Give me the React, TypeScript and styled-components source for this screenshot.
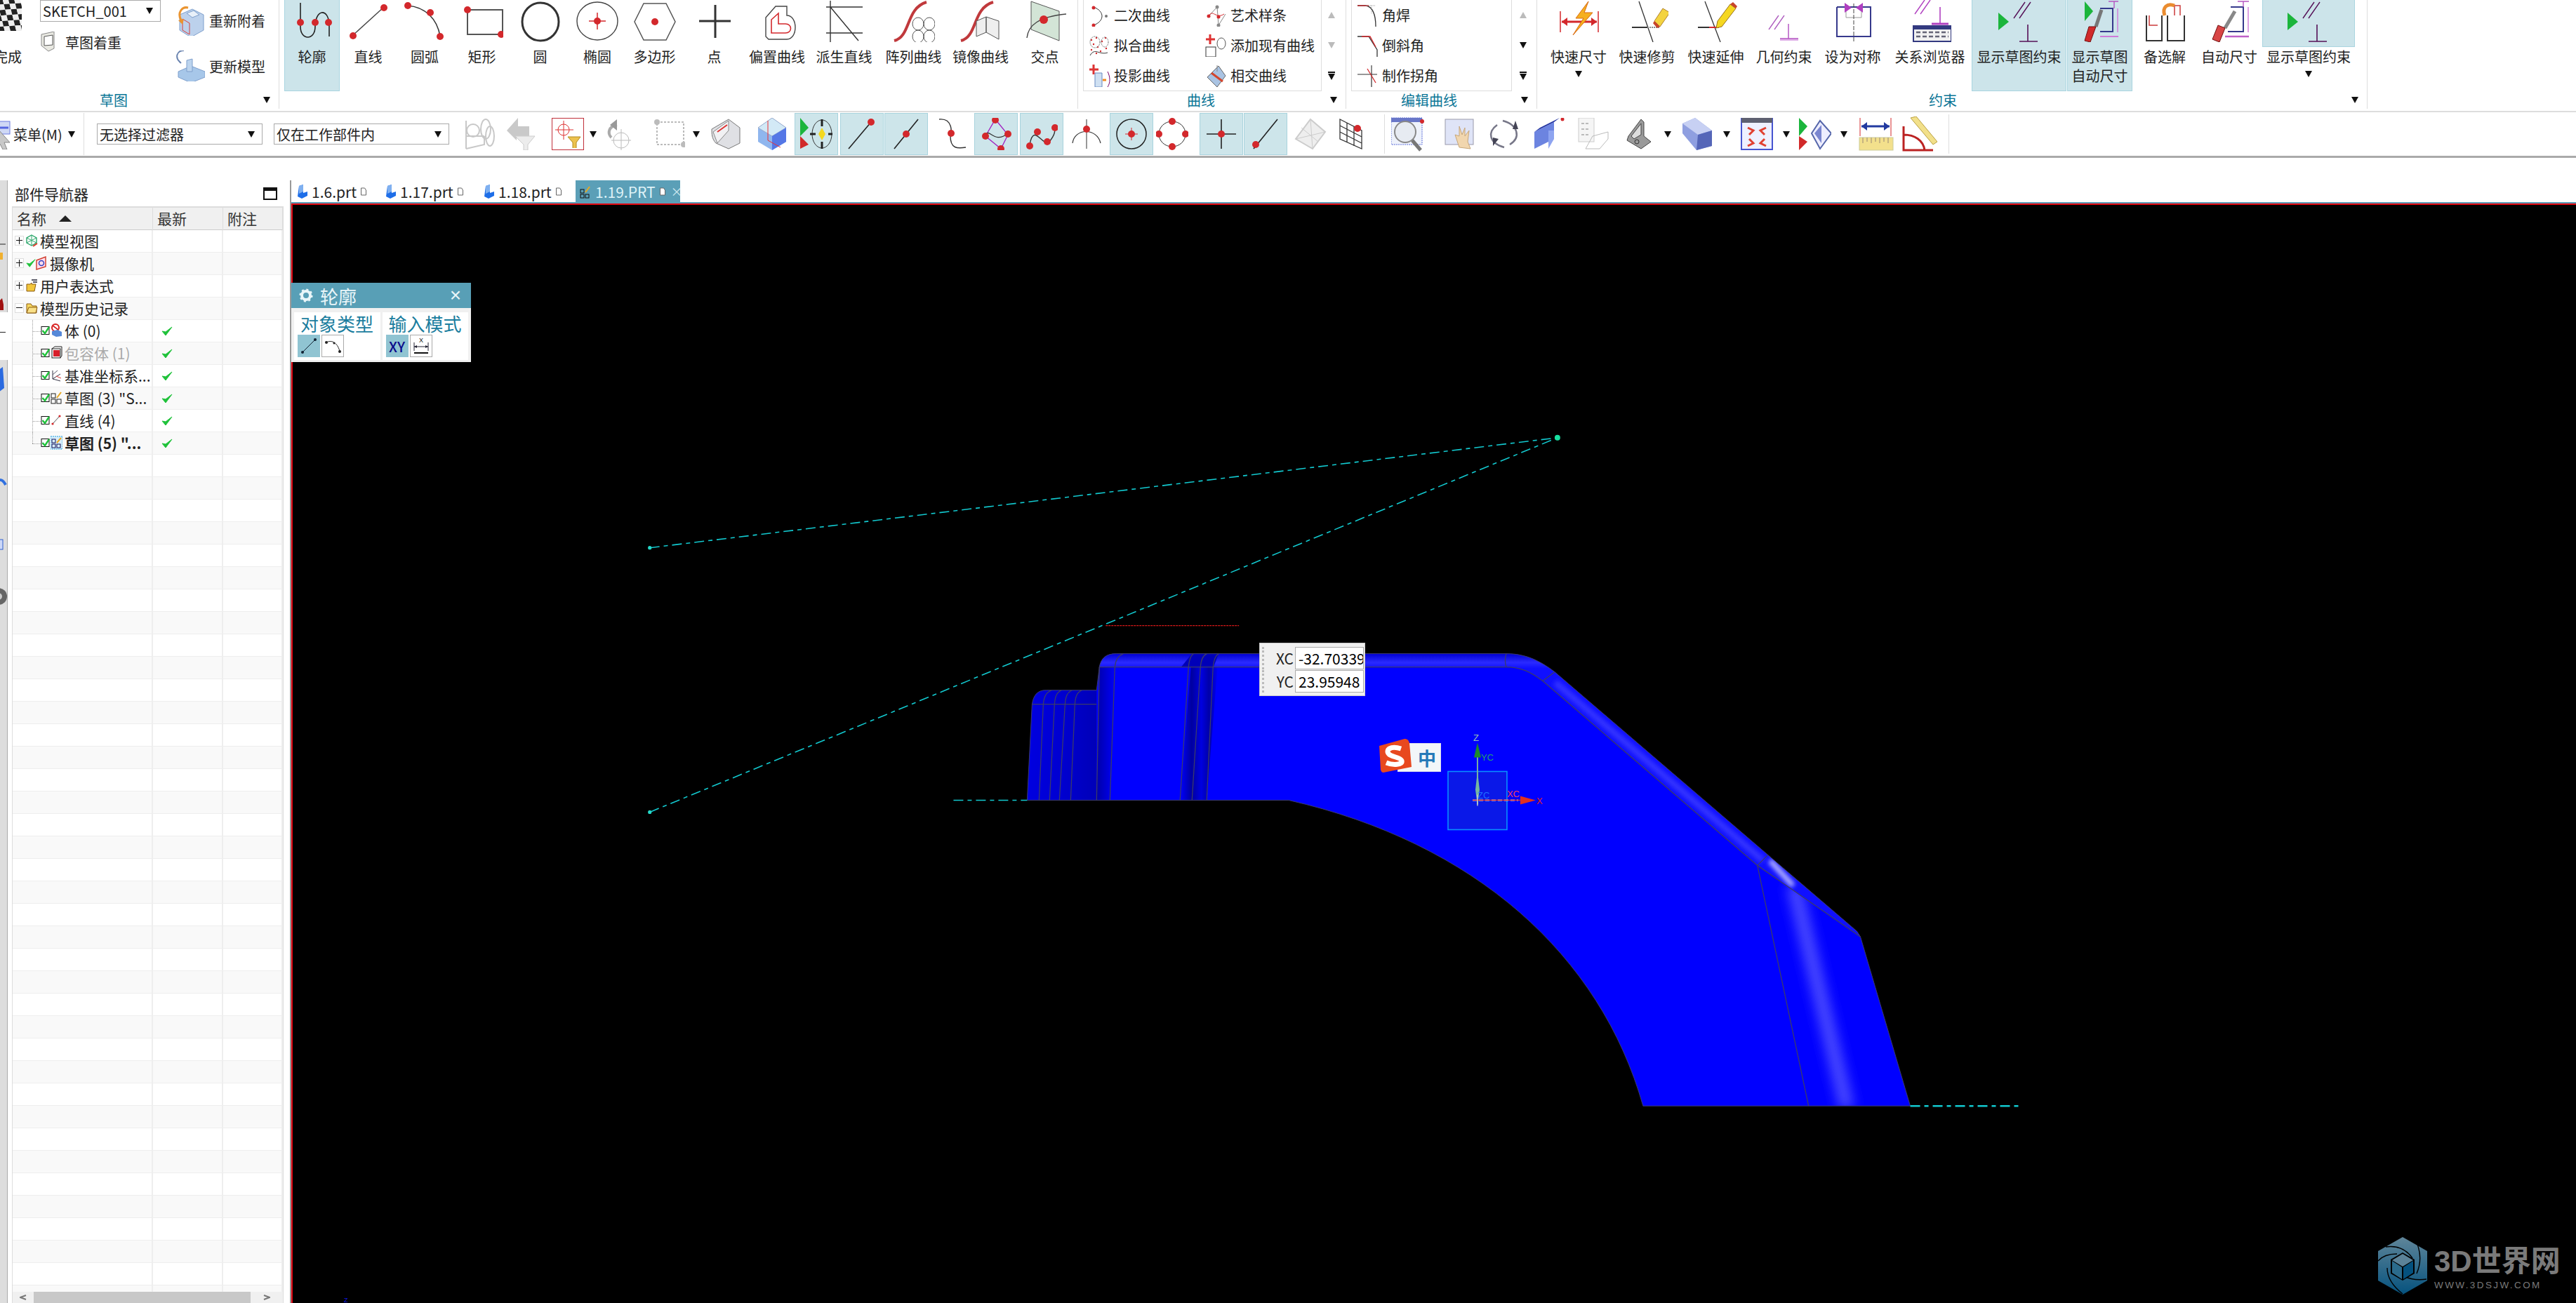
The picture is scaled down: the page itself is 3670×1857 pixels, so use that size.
import React from "react";
import styled, { createGlobalStyle } from "styled-components";

const Global = createGlobalStyle`
  html, body { margin: 0; padding: 0; background: #fff; overflow: hidden; }
  * { box-sizing: border-box; }
  body { font-family: "Noto Sans CJK SC", "Noto Sans", sans-serif; color: #222; }
`;

const Page = styled.div`width: 3670px; height: 1857px; overflow: hidden; display: flex; flex-direction: column; background: #fff;`;

/* ---------- ribbon ---------- */
const Ribbon = styled.div`display: flex; height: 160px; flex: none; border-bottom: 2px solid #ddd; margin-left: ${(p: { $ml: number }) => p.$ml}px;`;
const Group = styled.div<{ $w: number; $border?: boolean }>`
  width: ${(p) => p.$w}px; flex: none; height: 155px; display: flex; flex-direction: column;
  border-right: ${(p) => (p.$border === false ? "none" : "1px solid #ddd")};
`;
const GroupBody = styled.div<{ $pl?: number }>`height: 130px; display: flex; padding-left: ${(p) => p.$pl || 0}px;`;
const GroupFooter = styled.div`height: 25px; display: flex; align-items: center; padding-right: 12px; justify-content: flex-end;`;
const GroupLabel = styled.span<{ $ml: number }>`font-size: 20px; line-height: 25px; color: #0a7596; margin-right: auto; margin-left: ${(p) => p.$ml}px;`;
const Caret = styled.span<{ $c?: string; $up?: boolean }>`
  display: inline-block; width: 0; height: 0; border-left: 5px solid transparent; border-right: 5px solid transparent;
  ${(p) => (p.$up ? `border-bottom: 9px solid ${p.$c || "#111"};` : `border-top: 9px solid ${p.$c || "#111"};`)}
`;
const RibbonBtn = styled.div<{ $w: number; $on?: boolean; $mr?: number }>`
  width: ${(p) => p.$w}px; flex: none; height: 130px; display: flex; flex-direction: column; align-items: center;
  margin-right: ${(p) => p.$mr || 0}px;
  background: ${(p) => (p.$on ? "#cce4ea" : "transparent")};
  border: 1px solid ${(p) => (p.$on ? "#a9d5e0" : "transparent")};
  border-top: none;
`;
const IconWell = styled.div<{ $on?: boolean }>`
  height: 67px; width: 100%; display: flex; align-items: flex-start; justify-content: center; flex: none;
  background: ${(p) => (p.$on ? "#cce4ea" : "transparent")};
  box-shadow: ${(p) => (p.$on ? "inset 0 -1px 0 #a9d5e0, inset 1px 0 0 #a9d5e0, inset -1px 0 0 #a9d5e0" : "none")};
`;
const BtnLabel = styled.div`font-size: 20px; line-height: 27px; text-align: center; white-space: nowrap; color: #222;`;
const BtnCaret = styled.div`height: 22px; display: flex; align-items: center;`;

const SideCol = styled.div<{ $w: number; $ml?: number }>`width: ${(p) => p.$w}px; flex: none; margin-left: ${(p) => p.$ml || 0}px; display: flex; flex-direction: column;`;
const SideItem = styled.div<{ $h: number; $top?: number }>`height: ${(p) => p.$h}px; margin-top: ${(p) => p.$top || 0}px; display: flex; align-items: center; gap: 6px; font-size: 20px; white-space: nowrap;`;
const SelectBox = styled.div<{ $w: number; $h: number; $ml?: number; $fs?: number }>`
  width: ${(p) => p.$w}px; height: ${(p) => p.$h}px; margin-left: ${(p) => p.$ml || 0}px; flex: none; display: flex; align-items: center; justify-content: space-between;
  border: 1px solid #aaa; padding: 0 10px 0 3px; font-size: ${(p) => p.$fs || 20}px; background: #fff; white-space: nowrap;
`;
const Gallery = styled.div<{ $w: number; $cols: number }>`
  width: ${(p) => p.$w}px; height: 130px; flex: none; border: 1px solid #ddd; border-top: none; padding: 0 0 0 6px;
  display: grid; grid-template-columns: repeat(${(p) => p.$cols}, 1fr); grid-auto-rows: 43px;
`;
const GalleryItem = styled.div`display: flex; align-items: center; gap: 5px; font-size: 20px; white-space: nowrap;`;
const GalleryArrows = styled.div<{ $ml: number }>`width: 16px; margin-left: ${(p) => p.$ml}px; display: flex; flex-direction: column; align-items: center;`;
const ArrowCell = styled.div`height: 43px; display: flex; flex-direction: column; gap: 1px; align-items: center; justify-content: center;`;
const MoreBar = styled.span`width: 10px; height: 2px; background: #111;`;

/* ---------- toolbar ---------- */
const Toolbar = styled.div`height: 65px; flex: none; display: flex; align-items: center; border-bottom: 3px solid #aaa;`;
const MenuBlock = styled.div`width: 120px; height: 60px; flex: none; display: flex; align-items: center; border-right: 1px solid #ddd; font-size: 20px;`;
const MenuText = styled.span`margin-left: 3px; margin-right: 8px;`;
const ToolSlot = styled.div<{ $w: number; $ml: number; $on?: boolean; $framed?: boolean }>`
  width: ${(p) => p.$w}px; margin-left: ${(p) => p.$ml}px; height: ${(p) => (p.$framed ? 46 : 60)}px; flex: none; display: flex; align-items: center; justify-content: center;
  background: ${(p) => (p.$on ? "#cde5ea" : "transparent")};
  border: ${(p) => (p.$on ? "1px solid #a8d3dd" : p.$framed ? "1px solid #c0303a" : "none")};
`;
const ToolCaret = styled.div<{ $ml: number }>`width: 10px; margin-left: ${(p) => p.$ml}px; flex: none; display: flex;`;
const ToolSep = styled.div<{ $ml: number }>`width: 1px; height: 56px; background: #ddd; margin-left: ${(p) => p.$ml}px; flex: none;`;

/* ---------- main ---------- */
const TopGap = styled.div`height: 32px; flex: none;`;
const Main = styled.div`flex: 1; display: flex; min-height: 0;`;
const Strip = styled.div`width: 11px; flex: none; display: flex; flex-direction: column; overflow: hidden;`;
const StripSeg = styled.div<{ $h?: number }>`
  ${(p) => (p.$h ? `height:${p.$h}px;` : "flex:1;")} background: #ddd; border-right: 1px solid #aaa; overflow: hidden;
`;
const NavPanel = styled.div`width: 404px; flex: none; display: flex; flex-direction: column; padding: 0 9px 0 6px; border-right: 2px solid #999;`;
const NavTitle = styled.div`height: 37px; flex: none; display: flex; align-items: center; justify-content: space-between; padding: 0 9px 0 4px; font-size: 21px;`;
const MaxIcon = styled.span`width: 20px; height: 18px; border: 2px solid #111; border-top-width: 5px;`;
const NavTable = styled.div`flex: 1; min-height: 0; display: flex; flex-direction: column; border-left: 1px solid #ddd; border-right: 1px solid #ddd; border-top: 2px solid #ddd; overflow: hidden;`;
const HeadRow = styled.div`height: 32px; flex: none; display: grid; grid-template-columns: 200px 100px 1fr; background: #f0f0f0; border-bottom: 1px solid #ccc;`;
const HeadCell = styled.div`display: flex; align-items: center; gap: 18px; padding: 0 0 3px 6px; font-size: 21px; border-right: 1px solid #ddd; color: #333;`;
const SortMark = styled.span`width: 0; height: 0; border-left: 9px solid transparent; border-right: 9px solid transparent; border-bottom: 9px solid #222;`;
const Rows = styled.div`flex: 1; min-height: 0; overflow: hidden;`;
const TreeRow = styled.div<{ $odd: boolean }>`
  height: 32px; display: grid; grid-template-columns: 200px 100px 1fr; border-bottom: 1px solid #eee;
  background: ${(p) => (p.$odd ? "#f9f9f9" : "#fff")};
`;
const Cell = styled.div`border-right: 2px solid #eee; display: flex; align-items: center; min-width: 0;`;
const CheckCell = styled(Cell)`padding-left: 12px;`;
const NameCell = styled(Cell)<{ $child?: boolean; $last?: boolean; $trunk?: boolean }>`
  position: relative; padding: 0 0 2px ${(p) => (p.$child ? 40 : 3)}px; white-space: nowrap; overflow: hidden;
  &::before {
    content: ${(p) => (p.$child ? '""' : "none")}; position: absolute; left: 28px; top: 0; height: ${(p) => (p.$last ? "50%" : "100%")};
    border-left: 1px dotted #999;
  }
  &::after {
    content: ${(p) => (p.$child ? '""' : "none")}; position: absolute; left: 28px; top: 50%; width: 12px; border-top: 1px dotted #999;
  }
`;
const Expander = styled.span<{ $open?: boolean }>`
  width: 13px; height: 14px; flex: none; border: 1px solid #ddd; background: #fff; margin-right: 3px; position: relative;
  &::before { content: ""; position: absolute; left: 1px; right: 1px; top: 5px; height: 1px; background: #111; }
  &::after { content: ${(p) => (p.$open ? "none" : '""')}; position: absolute; top: 1px; bottom: 1px; left: 5px; width: 1px; background: #111; }
`;
const RowText = styled.span<{ $dim?: boolean; $bold?: boolean }>`
  font-size: 21px; margin-left: 3px; color: ${(p) => (p.$dim ? "#aaa" : "#222")}; font-weight: ${(p) => (p.$bold ? 700 : 400)};
`;
const ScrollBar = styled.div`height: 16px; flex: none; display: flex; background: #f0f0f0; margin-top: auto; align-items: center;`;
const ScrollEnd = styled.div<{ $w: number }>`width: ${(p) => p.$w}px; flex: none; display: flex; justify-content: center; color: #666;`;
const ScrollThumb = styled.div`flex: 1; height: 16px; background: #c8c8c8;`;

const Work = styled.div`flex: 1; min-width: 0; display: flex; flex-direction: column;`;
const TabBar = styled.div`height: 33px; flex: none; display: flex; border-bottom: 2px solid #5b9fb7; padding-left: 7px; background: #fff;`;
const Tab = styled.div<{ $w: number; $on?: boolean }>`
  width: ${(p) => p.$w}px; flex: none; display: flex; align-items: center; gap: 5px; font-size: 21px; padding-left: ${(p) => (p.$on ? 6 : 0)}px;
  background: ${(p) => (p.$on ? "#5b9fb7" : "transparent")}; color: ${(p) => (p.$on ? "#dff3f8" : "#222")};
`;
const TabClose = styled.span`font-size: 17px; color: #cfe8ef; margin-left: 2px;`;
const Viewport = styled.div`flex: 1; min-height: 0; position: relative; background: #000; border-top: 2px solid #e00010; border-left: 2px solid #e00010;`;
const Scene = styled.svg`display: block; width: 100%; height: 100%;`;

const Dialog = styled.div`position: absolute; left: -2px; top: 111px; width: 256px; height: 113px; background: #f0f0f0; display: flex; flex-direction: column;`;
const DialogHead = styled.div`height: 36px; flex: none; background: #589fb6; color: #eaf6f9; display: flex; align-items: center; padding: 0 14px 0 11px; font-size: 26px; gap: 10px;`;
const DialogClose = styled.span`margin-left: auto; font-size: 28px; font-family: "Liberation Sans", sans-serif; line-height: 1;`;
const DialogBody = styled.div`flex: 1; display: flex; gap: 3px; padding: 6px 4px 3px;`;
const DialogCard = styled.div`flex: 1; background: #fff; padding: 0 0 0 5px; display: flex; flex-direction: column;`;
const CardTitle = styled.div`font-size: 26px; line-height: 32px; color: #1a7d9e; padding-left: 4px; white-space: nowrap;`;
const CardBtns = styled.div`display: flex; gap: 2px;`;
const CardBtn = styled.div<{ $on?: boolean }>`
  width: 32px; height: 32px; display: flex; align-items: center; justify-content: center;
  background: ${(p) => (p.$on ? "#90c4d2" : "#fff")}; border: ${(p) => (p.$on ? "none" : "1px solid #aaa")};
  font-size: 20px; color: #0a0a8a; font-weight: 500;
`;

const Coords = styled.div`position: absolute; left: 1377px; top: 624px; width: 151px; height: 76px; background: #f0f0f0; border: 1px solid #ccc; display: grid; grid-template-columns: 50px 98px; grid-template-rows: 33px 33px; align-items: center; padding-top: 4px;`;
const CoordLabel = styled.div`font-size: 21px; line-height: 32px; text-align: right; padding-right: 2px; color: #222; border-left: 3px dotted #bbb; margin-left: 3px;`;
const CoordValue = styled.div`height: 32px; background: #fff; border: 1px solid #aaa; font-size: 21px; color: #000; overflow: hidden; white-space: nowrap; padding-left: 4px; line-height: 30px;`;

const Sogou = styled.div`position: absolute; left: 1544px; top: 761px; width: 92px; height: 48px;`;
const SogouBar = styled.div`position: absolute; left: 30px; top: 6px; width: 62px; height: 41px; background: #f2f6f9; color: #2579b8; font-size: 26px; font-weight: 700; display: flex; align-items: center; justify-content: center; padding-left: 22px; border: 1px solid #dde;`;
const Watermark = styled.div`position: absolute; left: 2970px; top: 1471px; display: flex; gap: 9px; align-items: center; color: #7a7a7a;`;
const MarkText = styled.div`display: flex; flex-direction: column;`;
const MarkTitle = styled.div`font-size: 42px; line-height: 46px; font-weight: 700; white-space: nowrap; font-family: "Liberation Sans", "Noto Sans CJK SC", sans-serif; margin-top: 6px;`;
const MarkUrl = styled.div`font-size: 13.5px; line-height: 16px; letter-spacing: 2.4px; font-family: "Liberation Sans", sans-serif; white-space: nowrap; margin-top: 3px;`;

/* ---------- icons ---------- */
const RED = "#d3282c";
const Dot = ({ x, y, r = 5, c = RED }: { x: number; y: number; r?: number; c?: string }) => <circle cx={x} cy={y} r={r} fill={c} />;
const Ic = ({ s = 60, v, children }: { s?: number; v?: string; children: React.ReactNode }) => (
  <svg width={s} height={s} viewBox={v || `0 0 ${s} ${s}`} fill="none" style={{ flex: "none" }}>{children}</svg>
);
const K = "#222";

const Big: Record<string, React.ReactNode> = {
  profile: <Ic><path d="M13 4V38C13 58 34 58 34 38C34 14 52 10 54 34V52" stroke={K} strokeWidth="1.6" /><Dot x={13} y={32} /><Dot x={34} y={32} /><Dot x={53} y={32} /></Ic>,
  line: <Ic><path d="M8 50L52 10" stroke="#444" strokeWidth="1.4" /><Dot x={52} y={11} /><Dot x={8} y={51} /></Ic>,
  arc: <Ic><path d="M6 8C30 10 48 26 52 52" stroke="#333" strokeWidth="1.6" /><Dot x={6} y={8} /><Dot x={38} y={18} /><Dot x={52} y={52} /></Ic>,
  rect: <Ic><rect x="9" y="14" width="50" height="35" stroke="#555" strokeWidth="2" /><Dot x={9} y={14} /><Dot x={57} y={49} /></Ic>,
  circle: <Ic><ellipse cx="30" cy="31" rx="26" ry="27" stroke="#333" strokeWidth="3" /></Ic>,
  ellipse: <Ic><ellipse cx="30" cy="30" rx="29" ry="27" stroke="#444" strokeWidth="1.4" /><Dot x={30} y={30} /><path d="M30 18V42M18 30H42" stroke={RED} strokeWidth="1.5" /></Ic>,
  polygon: <Ic><path d="M14 5H46L59 31L46 57H14L1 31Z" stroke="#555" strokeWidth="1.5" /><Dot x={30} y={31} /></Ic>,
  point: <Ic><path d="M31 7V54M8 30H53" stroke="#333" strokeWidth="3" /></Ic>,
  offset: <Ic><path d="M14 52V25L28 9H44V22C60 22 60 56 44 56H18Z" stroke="#444" strokeWidth="1.4" /><path d="M22 47V28L32 19V34H42C52 34 52 47 42 47Z" stroke={RED} strokeWidth="1.6" /></Ic>,
  derived: <Ic><path d="M4 10H56M4 47H56M10 1V60M10 10L50 58" stroke="#333" strokeWidth="1.4" /></Ic>,
  pattern: <Ic><path d="M2 58C26 52 18 12 48 3" stroke="#c0393c" strokeWidth="4" /><ellipse cx="36" cy="34" rx="8" ry="9" stroke="#555" /><ellipse cx="52" cy="34" rx="8" ry="9" stroke="#555" /><ellipse cx="36" cy="52" rx="8" ry="9" stroke="#555" /><ellipse cx="52" cy="52" rx="8" ry="9" stroke="#555" /></Ic>,
  mirror: <Ic><path d="M2 58C26 52 18 12 48 3" stroke="#c0393c" strokeWidth="4" /><path d="M24 30L38 24V46L24 52ZM38 24L56 30V56L38 46Z" fill="#eee" stroke="#555" /></Ic>,
  intersect: <Ic><path d="M10 2L50 16V58L10 42Z" fill="#d3e4d6" stroke="#555" /><path d="M4 54C6 36 20 24 60 20" stroke="#444" strokeWidth="1.4" /><Dot x={28} y={28} r={6} /></Ic>,
  rapid: <Ic><path d="M4 16V46M58 16V46" stroke={RED} strokeWidth="1.5" /><path d="M6 31H56" stroke={RED} strokeWidth="3" /><path d="M6 31L14 25V37ZM56 31L48 25V37Z" fill={RED} /><path d="M44 2L26 26H37L22 50L50 18H38Z" fill="#f5b020" stroke="#d96a10" /></Ic>,
  trim: <Ic><path d="M18 2L38 60" stroke="#333" strokeWidth="1.3" /><path d="M8 39H30" stroke="#333" strokeWidth="2" /><path d="M30 39H48" stroke="#888" strokeWidth="2" strokeDasharray="2 1" /><path d="M40 30L52 12L62 18L48 38Z" fill="#f3d340" stroke="#b0802a" /><path d="M40 30L48 38L44 40L38 33Z" fill="#c8452a" /></Ic>,
  extend: <Ic><path d="M14 2L36 60" stroke="#333" strokeWidth="1.3" /><path d="M4 39H20" stroke="#333" strokeWidth="2" /><path d="M20 39H34" stroke={RED} strokeWidth="2" /><path d="M32 30L50 6L58 12L38 38L30 40Z" fill="#f5d720" stroke="#98701a" /><path d="M50 6L54 3L60 9L58 12Z" fill="#c8452a" /></Ic>,
  geo: <Ic><path d="M8 42L22 22M16 42L30 22" stroke="#b060c0" strokeWidth="1.4" /><path d="M36 34V55M24 55H50" stroke="#b14dc0" strokeWidth="1.4" /><path d="M24 57H50" stroke="#e0b0e8" strokeWidth="2" /></Ic>,
  sym: <Ic><path d="M10 10V52H58V10H10" stroke="#36398c" strokeWidth="2" transform="translate(-3 0)" /><path d="M20 10V25H42V10" stroke="#999" strokeWidth="1" /><path d="M31 5V60" stroke="#444" strokeDasharray="6 2" strokeWidth="1" /><path d="M18 4L28 11L18 18ZM44 4L34 11L44 18Z" fill="#b13fc0" /></Ic>,
  browser: <Ic><path d="M8 20L22 0M16 20L30 0" stroke="#b040c0" strokeWidth="1.4" /><path d="M44 10V34" stroke="#b040c0" strokeWidth="1.6" /><path d="M32 34H56" stroke="#b040c0" strokeWidth="3" /><rect x="6" y="37" width="54" height="22" fill="#f1f1f1" stroke="#333a80" strokeWidth="2" /><rect x="6" y="37" width="54" height="5" fill="#333a80" /><path d="M10 46H56M10 52H56" stroke="#667" strokeWidth="2.5" strokeDasharray="6 3" /></Ic>,
  show: <Ic><path d="M0 18L15 31L0 43Z" fill="#1bb53c" /><path d="M22 26L38 3M30 26L46 3" stroke="#551057" strokeWidth="1.4" /><path d="M42 35V59M30 59H56" stroke="#551057" strokeWidth="1.6" /></Ic>,
  showAuto: <Ic><path d="M8 2L20 16L8 30Z" fill="#1bb53c" /><path d="M30 12H48V45H30" stroke="#36398c" strokeWidth="2" /><path d="M42 2H56M50 2V12" stroke="#b555c0" strokeWidth="1.4" /><path d="M55 12V46" stroke="#d07ad8" strokeWidth="1.4" /><path d="M30 52H56" stroke="#d07ad8" strokeWidth="2" /><path d="M32 14L24 38" stroke="#777" strokeWidth="5" /><path d="M24 38L16 60L8 58L14 38Z" fill="#d12a2a" stroke="#701010" /></Ic>,
  alt: <Ic><path d="M4 22V58H26V22M34 22V58H58V22" stroke="#333" strokeWidth="2" /><path d="M8 22V36H20M44 22V8H52V22" stroke="#cc3b3b" strokeWidth="1.5" /><path d="M30 22C26 10 34 4 44 8" stroke="#ea8c30" strokeWidth="5" /></Ic>,
  autoDim: <Ic><path d="M32 10H50V45H28" stroke="#36398c" strokeWidth="2" /><path d="M42 2H58M50 2V10" stroke="#b555c0" strokeWidth="1.4" /><path d="M57 10V46" stroke="#d07ad8" strokeWidth="1.4" /><path d="M24 52H58" stroke="#c060c8" strokeWidth="2.5" /><path d="M38 16L24 40" stroke="#888" strokeWidth="5" /><path d="M24 40L16 60L6 56L14 36Z" fill="#d84545" stroke="#701010" /></Ic>,
};

const S = 32;
const Small: Record<string, React.ReactNode> = {
  conic: <Ic s={S}><path d="M8 4C24 10 24 24 8 30" stroke="#333" /><Dot x={8} y={5} r={2.5} /><Dot x={8} y={30} r={2.5} /><Dot x={26} y={17} r={2} c="#777" /></Ic>,
  fit: <Ic s={S}><g fill={RED}><circle cx="5" cy="8" r="1.2" /><circle cx="12" cy="5" r="1.2" /><circle cx="8" cy="14" r="1.2" /><circle cx="14" cy="18" r="1.2" /><circle cx="20" cy="10" r="1.2" /><circle cx="25" cy="5" r="1.2" /><circle cx="5" cy="22" r="1.2" /><circle cx="26" cy="20" r="1.2" /><circle cx="18" cy="24" r="1.2" /><circle cx="12" cy="27" r="1.2" /></g><path d="M3 30C10 18 16 30 28 26" stroke="#333" /><ellipse cx="10" cy="11" rx="7" ry="8" stroke="#777" strokeDasharray="2 1" /><ellipse cx="24" cy="11" rx="5" ry="7" stroke="#777" strokeDasharray="2 1" /></Ic>,
  project: <Ic s={S}><path d="M8 0V14M2 7H15" stroke="#d33" strokeWidth="3" /><path d="M10 12H20V32H10Z" fill="#cfe0f2" stroke="#6689c0" /><path d="M28 10C32 18 32 26 28 32" stroke="#706" /><path d="M21 22H26" stroke="#f08a20" strokeWidth="3" /></Ic>,
  spline: <Ic s={S}><path d="M6 17L18 4L20 30L30 14" stroke="#888" /><Dot x={6} y={17} r={2.5} /><Dot x={18} y={4} r={2.5} c="#888" /><Dot x={20} y={30} r={2.5} c="#888" /><Dot x={20} y={18} r={2.5} /><path d="M6 17C12 6 16 22 28 14" stroke={RED} /></Ic>,
  add: <Ic s={S}><path d="M8 0V14M2 7H15" stroke="#d33" strokeWidth="3" /><ellipse cx="24" cy="13" rx="6" ry="8" stroke="#555" /><rect x="2" y="18" width="14" height="14" stroke="#333" /></Ic>,
  cross: <Ic s={S}><path d="M4 18L20 2L30 16L18 32Z" fill="#a9c3e2" stroke="#666" /><path d="M10 12L26 24" stroke="#d3452c" strokeWidth="3" /><path d="M18 1V10" stroke="#888" /></Ic>,
  fillet: <Ic s={S}><path d="M2 2H14C24 4 28 14 28 32" stroke="#333" strokeWidth="1.3" /><path d="M2 2H18" stroke={RED} strokeWidth="1.3" /><path d="M22 2V14M14 2H28" stroke="#999" strokeDasharray="1 1" /></Ic>,
  chamfer: <Ic s={S}><path d="M2 3H18L30 22V32" stroke="#333" strokeWidth="1.3" /><path d="M8 3H20L28 18" stroke={RED} strokeWidth="1.3" /></Ic>,
  corner: <Ic s={S}><path d="M2 14H30M22 32V1" stroke="#333" strokeWidth="1.2" /><path d="M16 6L28 26" stroke={RED} strokeWidth="1.3" /><path d="M22 1V10" stroke="#aaa" strokeDasharray="1 1" /></Ic>,
  refresh: <Ic s={44}><path d="M8 14L26 6L42 14V36L24 46L8 36Z" fill="#bcd1ec" stroke="#7f9fcc" /><path d="M18 12L28 8L36 14L26 18Z" fill="#e8f0f9" stroke="#7f9fcc" /><path d="M12 20V36L22 42V26Z" stroke="#d34040" /><path d="M10 22C4 10 12 2 20 4" stroke="#ea9430" strokeWidth="3" /><path d="M6 22L12 28L14 20Z" fill="#ea9430" /></Ic>,
  update: <Ic s={44}><path d="M6 30L24 22L44 30V38L24 46L6 38Z" fill="#a7c7e9" stroke="#7f9fcc" /><path d="M18 14L26 12V30H18Z" fill="#bcd4ee" stroke="#7f9fcc" /><path d="M10 18C0 10 4 0 14 0" stroke="#6b84b0" strokeWidth="2" /></Ic>,
  sketchShade: <Ic s={30}><path d="M2 4L20 0V24L12 28L2 20Z" fill="#e9e9e2" stroke="#888" /><path d="M6 7L18 5V19L6 20Z" fill="#fff" stroke="#555" /></Ic>,
};

const checker = Array.from({ length: 36 }, (_, i) => i);
const Flag = () => (
  <svg width="40" height="44" viewBox="0 0 40 44" style={{ flex: "none" }}>
    <g transform="rotate(-14 20 20) skewY(10)">
      {checker.map((i) => <rect key={i} x={-6 + (i % 6) * 8} y={-6 + Math.floor(i / 6) * 8} width="8" height="8" fill={(i + Math.floor(i / 6)) % 2 === 0 ? "#222" : "#eee"} />)}
    </g>
  </svg>
);

const T = 46;
const Tool: Record<string, React.ReactNode> = {
  d1: <Ic s={T}><g stroke="#c8c8c8" strokeWidth="2"><path d="M4 4V44M4 26H30M4 44L30 38V26" /><circle cx="14" cy="18" r="9" /><ellipse cx="32" cy="16" rx="7" ry="14" /><ellipse cx="38" cy="26" rx="6" ry="14" /></g></Ic>,
  d2: <Ic s={T}><path d="M20 0V12H36V26H18V32L4 18Z" fill="#c9c9c9" /><path d="M16 26H44L34 38V46H28V38Z" fill="#ececec" stroke="#ccc" /></Ic>,
  filter: <Ic s={40}><circle cx="14" cy="14" r="8" stroke="#d33" /><path d="M14 1V28M2 14H28" stroke="#d33" /><path d="M20 24H38L32 32V42H27V32Z" fill="#ecc24e" stroke="#b28a20" /></Ic>,
  undo: <Ic s={T}><path d="M18 10C6 12 4 22 10 28" stroke="#aaa" strokeWidth="4" /><path d="M14 2V18L4 10Z" fill="#999" transform="translate(4 0)" /><circle cx="24" cy="32" r="11" stroke="#bbb" /><path d="M24 16V46M10 32H38" stroke="#bbb" /></Ic>,
  d3: <Ic s={T}><rect x="6" y="6" width="38" height="32" stroke="#bbb" strokeWidth="2" strokeDasharray="3 2" /><Dot x={6} y={6} r={4} c="#bbb" /><Dot x={44} y={38} r={4} c="#bbb" /></Ic>,
  sect: <Ic s={T}><path d="M2 16L26 2L42 14V36L26 44L8 36C2 30 2 22 2 16Z" fill="#dfe0e4" stroke="#777" /><path d="M4 20L26 4V18L10 36Z" fill="#f1f1f3" stroke="#888" /><path d="M10 20L24 10" stroke="#d33" strokeWidth="2" /></Ic>,
  box: <Ic s={T}><path d="M24 0L44 14V34L24 46L4 34V14Z" fill="#8fb6ee" /><path d="M24 0L44 14L24 26L4 14Z" fill="#d3e9f6" stroke="#9ac" /><path d="M24 26V46L44 34V14Z" fill="#5577e6" /><path d="M18 4V32L36 42" stroke="#e33" /></Ic>,
  arrows: <Ic s={T}><path d="M0 0L12 14L0 26Z" fill="#1bb53c" /><path d="M0 28L12 40L0 46Z" fill="#d12a2a" transform="translate(0 -2)" /><ellipse cx="31" cy="23" rx="14" ry="20" stroke="#333" /><path d="M31 14L36 23L31 32L26 23Z" fill="#f4d820" /><path d="M31 2V12M31 34V44M14 23H22M40 23H46" stroke="#222" strokeWidth="3" /></Ic>,
  endp: <Ic s={T}><path d="M4 44L36 6" stroke="#222" strokeWidth="1.6" /><Dot x={36} y={6} r={5} /></Ic>,
  midp: <Ic s={T}><path d="M6 44L40 2" stroke="#222" strokeWidth="1.6" /><Dot x={23} y={23} r={5} /></Ic>,
  curve: <Ic s={T}><path d="M4 2C24 0 22 22 20 26C20 44 30 44 42 42" stroke="#333" strokeWidth="1.4" /><Dot x={21} y={22} r={5} /></Ic>,
  poly: <Ic s={T}><path d="M8 26L22 2L40 24L30 44Z" stroke="#a020c0" strokeWidth="1.3" /><path d="M8 24C14 14 20 38 40 22" stroke="#333" strokeWidth="1.3" /><Dot x={22} y={3} /><Dot x={8} y={26} /><Dot x={40} y={23} /><Dot x={30} y={44} /></Ic>,
  spline: <Ic s={T}><path d="M6 38C12 6 24 42 34 34C42 24 42 20 42 12" stroke="#333" strokeWidth="1.4" /><Dot x={6} y={40} /><Dot x={17} y={20} /><Dot x={31} y={34} /><Dot x={42} y={14} /></Ic>,
  inters: <Ic s={T}><path d="M3 36C6 14 38 14 43 36" stroke="#333" strokeWidth="1.2" /><path d="M23 2V44" stroke="#333" /><Dot x={23} y={16} r={5} /></Ic>,
  center: <Ic s={T}><ellipse cx="23" cy="23" rx="21" ry="21" stroke="#222" strokeWidth="1.5" /><Dot x={23} y={23} /><path d="M23 14V32M14 23H32" stroke={RED} /></Ic>,
  quad: <Ic s={T}><ellipse cx="23" cy="23" rx="19" ry="18" stroke="#333" /><Dot x={23} y={5} /><Dot x={23} y={41} /><Dot x={4} y={23} /><Dot x={42} y={23} /></Ic>,
  crossp: <Ic s={T}><path d="M23 2V44M2 23H44" stroke="#222" strokeWidth="1.6" /><Dot x={23} y={23} /></Ic>,
  tan: <Ic s={T}><path d="M6 44L40 2" stroke="#222" strokeWidth="1.6" /><Dot x={9} y={38} /></Ic>,
  mesh: <Ic s={T}><path d="M23 2L44 20L26 44L2 30Z" fill="#eee" stroke="#ccc" strokeWidth="2" /><path d="M23 2L26 44M2 30L44 20M10 14L34 34" stroke="#ccc" /></Ic>,
  grid: <Ic s={T}><path d="M3 2L34 18V44L3 30ZM3 11L34 27M3 20L34 36M13 7V35M23 12V40" stroke="#333" strokeWidth="1.3" /><Dot x={28} y={15} r={5} /></Ic>,
  mag: <Ic s={54} v="0 0 54 46"><rect x="0" y="0" width="44" height="38" fill="#eef2fb" stroke="#5a6cd8" strokeDasharray="2 1" /><rect x="0" y="0" width="44" height="6" fill="#6876c8" /><circle cx="20" cy="20" r="15" fill="#e7ebf2" stroke="#888" strokeWidth="2" /><path d="M30 32L42 46" stroke="#777" strokeWidth="5" /><Dot x={44} y={5} r={3} /></Ic>,
  hand: <Ic s={T}><rect x="2" y="2" width="40" height="36" fill="#dfe4f7" stroke="#99a" /><path d="M22 42L16 24L22 26V12L26 24L30 14V26L36 18L34 34L38 44Z" fill="#f1d6ae" stroke="#c6a67a" /></Ic>,
  rotate: <Ic s={T}><path d="M14 10C0 20 2 36 24 42" stroke="#778" strokeWidth="2.5" /><path d="M32 38C48 28 44 10 22 4" stroke="#778" strokeWidth="2.5" /><path d="M36 16L44 16L40 4ZM8 28L16 30L8 40Z" fill="#445" /></Ic>,
  block: <Ic s={T}><path d="M2 20L30 6V30L2 44Z" fill="#6c84e0" /><path d="M10 14L38 0L30 6L2 20Z" fill="#2233a0" /><path d="M22 18H30V30L22 44Z" fill="#8ea4f0" /><Dot x={42} y={2} r={2.5} /></Ic>,
  list: <Ic s={T}><rect x="2" y="0" width="22" height="34" stroke="#ccc" fill="#f5f5f5" /><path d="M6 8H18M6 16H18M6 24H18" stroke="#bbb" strokeDasharray="4 2" strokeWidth="2" /><path d="M12 44L22 26L44 20V30L32 44Z" stroke="#bbb" /></Ic>,
  plate: <Ic s={T}><path d="M8 26L26 2L30 6V26L40 34L26 44L6 32Z" fill="#9a9a9a" stroke="#444" /><path d="M12 26L26 8V24L16 30Z" fill="#ddd" stroke="#444" /><circle cx="20" cy="34" r="3" stroke="#333" /></Ic>,
  cube: <Ic s={T}><path d="M20 0L44 18V40L22 46L2 22V8Z" fill="#8f9fe0" /><path d="M20 0L44 18L24 24L2 8Z" fill="#c7d0f3" /><path d="M24 24L22 46L44 40V18Z" fill="#5566b8" /></Ic>,
  fit: <Ic s={T}><rect x="1" y="0" width="44" height="45" fill="#eef0ff" stroke="#4654d0" strokeWidth="2" /><rect x="1" y="0" width="44" height="7" fill="#5e6070" /><path d="M10 14L18 18L12 24M36 14L28 18L34 24M10 40L18 36L12 30M36 40L28 36L34 30" stroke="#e04030" strokeWidth="3" /></Ic>,
  diamond: <Ic s={T}><path d="M0 0L12 12L0 26Z" fill="#1bb53c" /><path d="M0 26L12 34L0 46Z" fill="#d12a2a" /><path d="M30 4L46 22L30 44L18 22Z" fill="#eef" stroke="#5566aa" strokeWidth="2" /><path d="M32 10V36L22 22Z" fill="#7a86d0" /></Ic>,
  measure: <Ic s={50}><path d="M2 2V28M46 2V28" stroke={RED} /><path d="M4 14H44" stroke="#223aa0" strokeWidth="3" /><path d="M4 14L12 8V20ZM44 14L36 8V20Z" fill="#223aa0" /><rect x="1" y="30" width="48" height="18" fill="#f3e08c" stroke="#cc9" /><path d="M6 30V38M12 30V36M18 30V38M24 30V36M30 30V38M36 30V36M42 30V38" stroke="#987" /></Ic>,
  ruler: <Ic s={50}><path d="M2 14V48H44M2 26C18 26 30 34 32 48" stroke="#b22" strokeWidth="3" /><path d="M12 2L20 0L50 36L44 40Z" fill="#f2e08a" stroke="#b9a040" /></Ic>,
};

const menuIcon = (
  <svg width="16" height="44" viewBox="0 0 16 44"><rect x="-4" y="4" width="18" height="18" fill="#cfd8f5" stroke="#6a7be0" /><path d="M0 13H12" stroke="#5566e0" strokeWidth="3" /><path d="M-2 16L14 34H6L10 44H4L0 36L-2 38Z" fill="#c8c8c8" stroke="#888" /></svg>
);

const g2 = [
  ["轮廓", 79, "profile", true], ["直线", 81, "line"], ["圆弧", 80, "arc"], ["矩形", 83, "rect"], ["圆", 83, "circle"], ["椭圆", 80, "ellipse"], ["多边形", 83, "polygon"],
  ["点", 87, "point"], ["偏置曲线", 92, "offset"], ["派生直线", 99, "derived"], ["阵列曲线", 99, "pattern"], ["镜像曲线", 92, "mirror"], ["交点", 91, "intersect"],
] as [string, number, string, boolean?][];

const tools: { a: number; b: number; k: string; on?: boolean; framed?: boolean }[] = [
  { a: 660, b: 705, k: "d1" }, { a: 722, b: 760, k: "d2" }, { a: 786, b: 832, k: "filter", framed: true }, { a: 840, b: 850, k: "^" }, { a: 862, b: 905, k: "undo" }, { a: 930, b: 975, k: "d3" }, { a: 987, b: 997, k: "^" },
  { a: 1012, b: 1058, k: "sect" }, { a: 1075, b: 1122, k: "box" }, { a: 1132, b: 1194, k: "arrows", on: true }, { a: 1197, b: 1259, k: "endp", on: true }, { a: 1260, b: 1322, k: "midp", on: true }, { a: 1335, b: 1378, k: "curve" },
  { a: 1388, b: 1450, k: "poly", on: true }, { a: 1453, b: 1515, k: "spline", on: true }, { a: 1525, b: 1570, k: "inters" }, { a: 1581, b: 1643, k: "center", on: true }, { a: 1645, b: 1695, k: "quad" },
  { a: 1709, b: 1771, k: "crossp", on: true }, { a: 1772, b: 1834, k: "tan", on: true }, { a: 1843, b: 1890, k: "mesh" }, { a: 1906, b: 1952, k: "grid" }, { a: 1972, b: 1973, k: "|" },
  { a: 1982, b: 2036, k: "mag" }, { a: 2057, b: 2103, k: "hand" }, { a: 2118, b: 2165, k: "rotate" }, { a: 2183, b: 2230, k: "block" }, { a: 2247, b: 2293, k: "list" }, { a: 2312, b: 2358, k: "plate" }, { a: 2371, b: 2381, k: "^" },
  { a: 2395, b: 2441, k: "cube" }, { a: 2455, b: 2465, k: "^" }, { a: 2480, b: 2526, k: "fit" }, { a: 2540, b: 2550, k: "^" }, { a: 2563, b: 2609, k: "diamond" }, { a: 2622, b: 2632, k: "^" }, { a: 2648, b: 2698, k: "measure" }, { a: 2710, b: 2760, k: "ruler" }, { a: 2776, b: 2777, k: "|" },
];

const Check = ({ size = 16 }: { size?: number }) => (
  <svg width={size} height={size} viewBox="0 0 16 16" style={{ flex: "none" }}><path d="M1 8L6 14L15 2L6 9Z" fill="#1fc23a" stroke="#1fc23a" /></svg>
);
const CheckBox = () => (
  <svg width="14" height="14" viewBox="0 0 14 14" style={{ flex: "none" }}><rect x="1" y="1.5" width="11" height="11" fill="#fff" stroke="#111" /><path d="M2.5 7L6 11L12 2" stroke="#1fc23a" strokeWidth="2.4" fill="none" /></svg>
);
const r16 = (c: React.ReactNode) => <svg width="17" height="20" viewBox="0 0 17 20" fill="none" style={{ flex: "none" }}>{c}</svg>;
const TreeIcons: Record<string, React.ReactNode> = {
  view: r16(<><path d="M8 2L15 6V13L8 17L1 13V6Z" stroke="#2aa66a" strokeWidth="1.4" /><path d="M8 2V17M1 6L15 13M15 6L1 13" stroke="#2aa66a" /><path d="M10 18L16 14" stroke="#e03a2a" strokeWidth="2" /></>),
  cam: r16(<><path d="M1 6L14 1V15L1 19Z" fill="#fde" stroke="#d03a2a" strokeWidth="1.4" /><circle cx="8" cy="10" r="3.5" stroke="#3040c0" strokeWidth="1.5" /></>),
  folderE: r16(<><path d="M1 8H6L8 6V8H14L12 18H1Z" fill="#f2c63c" stroke="#8a5a10" /><path d="M8 2H16M10 5H16" stroke="#223" strokeWidth="1.3" /></>),
  folder: r16(<><path d="M1 4H7L9 7H15V17H1Z" fill="#f6d860" stroke="#8a5a10" /><path d="M1 17L4 9H16L14 17Z" fill="#f9e088" stroke="#8a5a10" /></>),
  body: r16(<><circle cx="7" cy="6" r="5" stroke="#d82020" strokeWidth="2" /><path d="M3 3L11 9" stroke="#d82020" strokeWidth="1.6" /><path d="M2 11L10 9L16 12V18L8 19L2 16Z" fill="#5588d8" /></>),
  cont: r16(<><rect x="2" y="4" width="12" height="13" stroke="#222" /><path d="M2 4L6 1H16V14L14 17" stroke="#222" /><rect x="4" y="6" width="9" height="9" fill="#d81e2a" /></>),
  datum: r16(<><path d="M3 3V15L14 18M3 15L14 8" stroke="#334" /><path d="M3 9L10 3" stroke="#556" /><path d="M8 11L15 14" stroke="#d33" /></>),
  sketch: r16(<><rect x="1" y="4" width="6" height="6" stroke="#222" /><rect x="1" y="12" width="6" height="6" stroke="#222" /><rect x="9" y="12" width="6" height="6" stroke="#222" /><path d="M9 10L15 2" stroke="#e8a820" strokeWidth="2" /></>),
  lineI: r16(<><path d="M3 15L13 4" stroke="#555" /><Dot x={3} y={15} r={1.6} /><Dot x={13} y={4} r={1.6} /></>),
  sketchA: r16(<><rect x="0" y="1" width="17" height="18" fill="#d8eefc" stroke="#1d9de0" strokeDasharray="2 1" /><rect x="2" y="5" width="5" height="5" stroke="#115" /><rect x="2" y="12" width="5" height="5" stroke="#115" /><rect x="9" y="12" width="5" height="5" stroke="#115" /><path d="M9 10L15 3" stroke="#e8a820" strokeWidth="2" /></>),
};

type RowD = { t: string; icon: string; exp?: "+" | "-"; check?: boolean; child?: boolean; dim?: boolean; bold?: boolean; last?: boolean };
const rowData: RowD[] = [
  { t: "模型视图", icon: "view", exp: "+" },
  { t: "摄像机", icon: "cam", exp: "+", check: true },
  { t: "用户表达式", icon: "folderE", exp: "+" },
  { t: "模型历史记录", icon: "folder", exp: "-" },
  { t: "体 (0)", icon: "body", child: true },
  { t: "包容体 (1)", icon: "cont", child: true, dim: true },
  { t: "基准坐标系...", icon: "datum", child: true },
  { t: "草图 (3) \"S...", icon: "sketch", child: true },
  { t: "直线 (4)", icon: "lineI", child: true },
  { t: "草图 (5) \"...", icon: "sketchA", child: true, bold: true, last: true },
];
const emptyRows = Array.from({ length: 38 }, (_, i) => i);

const TabDoc = () => <svg width="10" height="14" viewBox="0 0 10 14" style={{ flex: "none" }}><path d="M1.5 2H6.5L8.5 5V12H1.5Z" fill="#fff" stroke="#666" /></svg>;
const TabBlock = () => <svg width="17" height="22" viewBox="0 0 17 22" style={{ flex: "none" }}><path d="M4 3L10 1V13L16 11V17L8 21L2 18Z" fill="#1e6ee8" /><path d="M4 3L10 1V11L4 14Z" fill="#7fb0f0" /></svg>;
const TabSketch = () => <svg width="17" height="22" viewBox="0 0 17 22" fill="none" style={{ flex: "none" }}><rect x="1" y="8" width="5" height="5" stroke="#111" /><rect x="1" y="15" width="5" height="5" stroke="#111" /><rect x="8" y="15" width="5" height="5" stroke="#111" /><path d="M8 12L14 4" stroke="#e8a820" strokeWidth="2" /></svg>;

const EDGE = "#3b3b6a";
const PART_D = "M1463,1140 L1470,1003 C1472,990 1478,983 1490,983 L1562,983 L1566,950 C1568,938 1575,931 1590,931 L2146,931 C2175,931 2195,942 2215,957 L2646,1327 L2651,1335 L2722,1576 L2341,1576 C2280,1360 2100,1200 1836,1140 Z";
const RIM_D = "M1566,950 C1568,938 1575,931 1590,931 L2146,931 C2175,931 2195,942 2215,957 L2646,1327 L2651,1335 L2504,1233 L2198,970 C2180,956 2165,950 2146,950 Z";

const PartScene = () => (
  <Scene viewBox="417 291 3253 1566">
    <defs>
      <clipPath id="part"><path d={PART_D} /></clipPath>
      <clipPath id="rim"><path d={RIM_D} /></clipPath>
      <clipPath id="lower"><path d="M2504,1233 L2651,1335 L2722,1576 L2577,1576 Z" /></clipPath>
      <linearGradient id="rimG" gradientUnits="userSpaceOnUse" x1="0" y1="931" x2="0" y2="952">
        <stop offset="0" stopColor="#0000d0" /><stop offset="0.6" stopColor="#2a2aff" /><stop offset="1" stopColor="#1010ff" />
      </linearGradient>
      <linearGradient id="tabG" x1="0" x2="1" y1="0" y2="0">
        <stop offset="0" stopColor="#0000e0" /><stop offset="0.5" stopColor="#0000d0" /><stop offset="1" stopColor="#0000b8" />
      </linearGradient>
      <linearGradient id="bandG" x1="0" x2="1" y1="0" y2="0">
        <stop offset="0" stopColor="#0000a8" /><stop offset="1" stopColor="#0000ff" />
      </linearGradient>
      <linearGradient id="grooveG" x1="0" x2="1" y1="0" y2="0">
        <stop offset="0" stopColor="#0000ff" /><stop offset="0.3" stopColor="#0000a0" /><stop offset="0.55" stopColor="#0000e0" /><stop offset="0.75" stopColor="#0000a8" /><stop offset="1" stopColor="#0000ff" />
      </linearGradient>
      <filter id="b10" x="-50%" y="-50%" width="200%" height="200%"><feGaussianBlur stdDeviation="9" /></filter>
      <filter id="b3" x="-50%" y="-50%" width="200%" height="200%"><feGaussianBlur stdDeviation="3" /></filter>
    </defs>

    <path d={PART_D} fill="#0000ff" />
    <g clipPath="url(#part)">
      <path d="M1463,1140 L1470,983 L1562,983 L1562,1140 Z" fill="url(#tabG)" />
      <path d="M1562,1140 L1566,931 L1590,931 L1581,1140 Z" fill="url(#bandG)" />
      <path d="M1681,1140 L1698,931 L1736,931 L1719,1140 Z" fill="url(#grooveG)" />
    </g>
    <path d={RIM_D} fill="url(#rimG)" />
    <g clipPath="url(#rim)">
      <path d="M2216,972 L2512,1226" stroke="#3434ff" strokeWidth="9" filter="url(#b3)" />
      <path d="M1681,952 L1698,931 L1736,931 L1728,952 Z" fill="#0000b8" />
      <path d="M2522,1226 L2555,1262" stroke="#b0b0ff" strokeWidth="8" filter="url(#b3)" />
    </g>
    <g clipPath="url(#lower)">
      <path d="M2556,1260 L2632,1580" stroke="#5050ff" strokeWidth="20" filter="url(#b10)" />
    </g>

    <g stroke={EDGE} strokeWidth="1.3" fill="none">
      <path d={PART_D} strokeWidth="1" />
      <path d="M1470,1003 H1562" />
      <path d="M1480,1140 L1486,1003 C1487,992 1490,986 1498,983M1495,1140 L1502,1003 C1503,992 1505,986 1512,983M1509,1140 L1517,1003 C1518,992 1520,986 1527,983M1525,1140 L1531,1003 C1532,992 1534,986 1541,983" />
      <path d="M1562,1140 L1566,950 H2146 C2165,950 2180,956 2198,970 L2504,1233 L2651,1335" />
      <path d="M1581,1140 L1588,950 C1589,940 1592,934 1600,931" />
      <path d="M1681,1140 L1693,950 C1694,940 1696,934 1700,931M1698,1140 L1710,950 C1711,940 1713,934 1719,931M1719,1140 L1728,950 C1729,940 1731,934 1736,931" />
      <path d="M2146,931 C2144,938 2144,944 2146,950M2198,970 L2215,957M2504,1233 L2519,1218M2504,1233 L2577,1576" />
    </g>

    <g stroke="#12c9cf" strokeWidth="1.6" strokeDasharray="14 6 6 6" fill="none">
      <path d="M925,780 L2219,623" />
      <path d="M925,1157 L2219,623" />
      <path d="M1358,1140 H1463" />
      <path d="M2722,1576 H2879" strokeWidth="2.4" />
    </g>
    <path d="M1575,891 H1765" stroke="#d81818" strokeWidth="1.2" strokeDasharray="3 1" />
    <circle cx="2219" cy="623" r="4" fill="#18e0a0" />
    <circle cx="925" cy="780" r="2.6" fill="#24d8c8" />
    <circle cx="925" cy="1157" r="2.6" fill="#24d8c8" />

    <rect x="2063" y="1099" width="84" height="83" fill="#0a18e8" stroke="#0a8fff" strokeWidth="1.6" />
    <path d="M2105,1078 L2105,1146" stroke="#7ab0a0" strokeWidth="2" />
    <path d="M2105,1099 L2102,1125 L2105,1146 L2108,1125 Z" fill="#76b8a0" />
    <path d="M2105,1058 L2100,1079 H2110 Z" fill="#1d8a2a" />
    <path d="M2098,1140 H2163" stroke="#e0e0e0" strokeWidth="2" strokeDasharray="6 3" />
    <path d="M2098,1140 H2166" stroke="#e03030" strokeWidth="1.2" />
    <path d="M2166,1134 L2188,1140 L2166,1146 Z" fill="#e03020" />
    <path d="M2105,1132 V1148" stroke="#ccc" strokeWidth="1.4" />
    <g fontFamily="Liberation Sans, sans-serif" fontSize="13">
      <text x="2099" y="1056" fill="#9ac0b0">Z</text>
      <text x="2110" y="1084" fill="#20a070">YC</text>
      <text x="2105" y="1138" fill="#1f6fff">ZC</text>
      <text x="2147" y="1136" fill="#f04060">XC</text>
      <text x="2189" y="1146" fill="#e02020">X</text>
    </g>
    <text x="489" y="1856" fontFamily="Liberation Sans, sans-serif" fontSize="9" fill="#1018e0">Z</text>
  </Scene>
);

const StripIconsTop = () => (
  <svg width="10" height="188" viewBox="0 0 10 188"><path d="M0 91H8" stroke="#222" /><rect x="-2" y="103" width="6" height="10" fill="#f0b030" /><path d="M-2 173L3 168L5 177V185H-2Z" fill="#a01010" /></svg>
);
const StripIconsBottom = () => (
  <svg width="10" height="1344" viewBox="0 0 10 1344"><path d="M4 10L-2 14V46L6 40Z" fill="#2a6ae0" /><path d="M8 178C4 170 0 170 -4 172" stroke="#3070e0" strokeWidth="4" fill="none" /><rect x="-2" y="256" width="6" height="14" fill="#ccd8f8" stroke="#3060d0" /><circle cx="-2" cy="337" r="12" fill="#666" /><circle cx="-2" cy="337" r="5" fill="#ccc" /></svg>
);
const StripGapIcons = styled.div`height: 68px; flex: none; padding-top: 28px;`;
const StripDash = styled.div`width: 8px; height: 1px; background: #222;`;

export default function App() {
  let prev = 640;
  return (
    <Page>
      <Global />
      <Ribbon $ml={-73}>
        <Group $w={471}>
          <GroupBody>
            <SideCol $w={72} $ml={48}>
              <IconWell><Flag /></IconWell>
              <BtnLabel>完成</BtnLabel>
            </SideCol>
            <SideCol $w={191} $ml={10}>
              <SelectBox $w={172} $h={31} $fs={20}>SKETCH_001<Caret /></SelectBox>
              <SideItem $h={32} $top={13}>{Small.sketchShade}<span>草图着重</span></SideItem>
            </SideCol>
            <SideCol $w={140}>
              <SideItem $h={46} $top={6}>{Small.refresh}<span>重新附着</span></SideItem>
              <SideItem $h={46} $top={19}>{Small.update}<span>更新模型</span></SideItem>
            </SideCol>
          </GroupBody>
          <GroupFooter>
            <GroupLabel $ml={215}>草图</GroupLabel>
            <Caret />
          </GroupFooter>
        </Group>
        <Group $w={1138}>
          <GroupBody $pl={7}>
            {g2.map(([t, w, k, on]) => (
              <RibbonBtn key={t} $w={w} $on={on}>
                <IconWell>{Big[k]}</IconWell>
                <BtnLabel>{t}</BtnLabel>
              </RibbonBtn>
            ))}
          </GroupBody>
        </Group>
        <Group $w={382}>
          <GroupBody $pl={7}>
            <Gallery $w={340} $cols={2}>
              <GalleryItem>{Small.conic}二次曲线</GalleryItem>
              <GalleryItem>{Small.spline}艺术样条</GalleryItem>
              <GalleryItem>{Small.fit}拟合曲线</GalleryItem>
              <GalleryItem>{Small.add}添加现有曲线</GalleryItem>
              <GalleryItem>{Small.project}投影曲线</GalleryItem>
              <GalleryItem>{Small.cross}相交曲线</GalleryItem>
            </Gallery>
            <GalleryArrows $ml={6}>
              <ArrowCell><Caret $up $c="#bbb" /></ArrowCell>
              <ArrowCell><Caret $c="#bbb" /></ArrowCell>
              <ArrowCell><MoreBar /><Caret /></ArrowCell>
            </GalleryArrows>
          </GroupBody>
          <GroupFooter>
            <GroupLabel $ml={155}>曲线</GroupLabel>
            <Caret />
          </GroupFooter>
        </Group>
        <Group $w={272}>
          <GroupBody $pl={7}>
            <Gallery $w={229} $cols={1}>
              <GalleryItem>{Small.fillet}角焊</GalleryItem>
              <GalleryItem>{Small.chamfer}倒斜角</GalleryItem>
              <GalleryItem>{Small.corner}制作拐角</GalleryItem>
            </Gallery>
            <GalleryArrows $ml={8}>
              <ArrowCell><Caret $up $c="#bbb" /></ArrowCell>
              <ArrowCell><Caret /></ArrowCell>
              <ArrowCell><MoreBar /><Caret /></ArrowCell>
            </GalleryArrows>
          </GroupBody>
          <GroupFooter>
            <GroupLabel $ml={78}>编辑曲线</GroupLabel>
            <Caret />
          </GroupFooter>
        </Group>
        <Group $w={1183}>
          <GroupBody $pl={10}>
            <RibbonBtn $w={98}><IconWell>{Big.rapid}</IconWell><BtnLabel>快速尺寸</BtnLabel><BtnCaret><Caret /></BtnCaret></RibbonBtn>
            <RibbonBtn $w={97}><IconWell>{Big.trim}</IconWell><BtnLabel>快速修剪</BtnLabel></RibbonBtn>
            <RibbonBtn $w={99}><IconWell>{Big.extend}</IconWell><BtnLabel>快速延伸</BtnLabel></RibbonBtn>
            <RibbonBtn $w={95}><IconWell>{Big.geo}</IconWell><BtnLabel>几何约束</BtnLabel></RibbonBtn>
            <RibbonBtn $w={101}><IconWell>{Big.sym}</IconWell><BtnLabel>设为对称</BtnLabel></RibbonBtn>
            <RibbonBtn $w={119}><IconWell>{Big.browser}</IconWell><BtnLabel>关系浏览器</BtnLabel></RibbonBtn>
            <RibbonBtn $w={135} $on $mr={1}><IconWell>{Big.show}</IconWell><BtnLabel>显示草图约束</BtnLabel></RibbonBtn>
            <RibbonBtn $w={93} $on><IconWell>{Big.showAuto}</IconWell><BtnLabel>显示草图<br />自动尺寸</BtnLabel></RibbonBtn>
            <RibbonBtn $w={92}><IconWell>{Big.alt}</IconWell><BtnLabel>备选解</BtnLabel></RibbonBtn>
            <RibbonBtn $w={92}><IconWell>{Big.autoDim}</IconWell><BtnLabel>自动尺寸</BtnLabel></RibbonBtn>
            <RibbonBtn $w={134}><IconWell $on>{Big.show}</IconWell><BtnLabel>显示草图约束</BtnLabel><BtnCaret><Caret /></BtnCaret></RibbonBtn>
          </GroupBody>
          <GroupFooter>
            <GroupLabel $ml={558}>约束</GroupLabel>
            <Caret />
          </GroupFooter>
        </Group>
      </Ribbon>

      <Toolbar>
        <MenuBlock>
          {menuIcon}
          <MenuText>菜单(M)</MenuText>
          <Caret />
        </MenuBlock>
        <SelectBox $w={236} $h={30} $ml={18}>无选择过滤器<Caret /></SelectBox>
        <SelectBox $w={250} $h={30} $ml={16}>仅在工作部件内<Caret /></SelectBox>
        {tools.map((t, i) => {
          const ml = t.a - prev;
          prev = t.b;
          if (t.k === "^") return <ToolCaret key={i} $ml={ml}><Caret /></ToolCaret>;
          if (t.k === "|") return <ToolSep key={i} $ml={ml} />;
          return <ToolSlot key={i} $w={t.b - t.a} $ml={ml} $on={t.on} $framed={t.framed}>{Tool[t.k]}</ToolSlot>;
        })}
      </Toolbar>

      <TopGap />
      <Main>
        <Strip>
          <StripSeg $h={188}><StripIconsTop /></StripSeg>
          <StripGapIcons><StripDash /></StripGapIcons>
          <StripSeg><StripIconsBottom /></StripSeg>
        </Strip>
        <NavPanel>
          <NavTitle>部件导航器<MaxIcon /></NavTitle>
          <NavTable>
            <HeadRow>
              <HeadCell>名称<SortMark /></HeadCell>
              <HeadCell>最新</HeadCell>
              <HeadCell>附注</HeadCell>
            </HeadRow>
            <Rows>
              {rowData.map((r, i) => (
                <TreeRow key={r.t} $odd={i % 2 === 1}>
                  <NameCell $child={r.child} $last={r.last}>
                    {r.exp && <Expander $open={r.exp === "-"} />}
                    {r.child && <CheckBox />}
                    {r.exp && r.check && <Check size={14} />}
                    {TreeIcons[r.icon]}
                    <RowText $dim={r.dim} $bold={r.bold}>{r.t}</RowText>
                  </NameCell>
                  <CheckCell>{r.child && <Check />}</CheckCell>
                  <Cell />
                </TreeRow>
              ))}
              {emptyRows.map((i) => (
                <TreeRow key={i} $odd={(i + rowData.length) % 2 === 1}>
                  <Cell /><Cell /><Cell />
                </TreeRow>
              ))}
            </Rows>
            <ScrollBar>
              <ScrollEnd $w={30}><svg width="10" height="8" viewBox="0 0 10 8"><path d="M9 1L1 4L9 7" fill="none" stroke="#777" strokeWidth="2" /></svg></ScrollEnd>
              <ScrollThumb />
              <ScrollEnd $w={46}><svg width="10" height="8" viewBox="0 0 10 8"><path d="M1 1L9 4L1 7" fill="none" stroke="#777" strokeWidth="2" /></svg></ScrollEnd>
            </ScrollBar>
          </NavTable>
        </NavPanel>
        <Work>
          <TabBar>
            <Tab $w={126}><TabBlock />1.6.prt<TabDoc /></Tab>
            <Tab $w={140}><TabBlock />1.17.prt<TabDoc /></Tab>
            <Tab $w={132}><TabBlock />1.18.prt<TabDoc /></Tab>
            <Tab $w={149} $on><TabSketch />1.19.PRT<TabDoc /><TabClose>×</TabClose></Tab>
          </TabBar>
          <Viewport>
            <PartScene />
            <Dialog>
              <DialogHead>
                <svg width="20" height="20" viewBox="0 0 20 20"><circle cx="10" cy="10" r="6" fill="none" stroke="#eaf6f9" strokeWidth="4" /><circle cx="10" cy="10" r="8.4" fill="none" stroke="#eaf6f9" strokeWidth="2.4" strokeDasharray="3 3.6" /></svg>
                轮廓
                <DialogClose>×</DialogClose>
              </DialogHead>
              <DialogBody>
                <DialogCard>
                  <CardTitle>对象类型</CardTitle>
                  <CardBtns>
                    <CardBtn $on><svg width="24" height="24" viewBox="0 0 24 24"><path d="M3 21L21 3" stroke="#123" /><circle cx="3" cy="21" r="2" fill="#123" /><circle cx="21" cy="3" r="2" fill="#123" /></svg></CardBtn>
                    <CardBtn><svg width="24" height="24" viewBox="0 0 24 24" fill="none"><path d="M3 7C12 2 20 10 22 20" stroke="#222" /><circle cx="3" cy="7" r="2" fill="#222" /><circle cx="22" cy="20" r="2" fill="#222" /><circle cx="14" cy="8" r="1.5" fill="#222" /></svg></CardBtn>
                  </CardBtns>
                </DialogCard>
                <DialogCard>
                  <CardTitle>输入模式</CardTitle>
                  <CardBtns>
                    <CardBtn $on>XY</CardBtn>
                    <CardBtn><svg width="26" height="26" viewBox="0 0 26 26" fill="none"><path d="M3 8V20M23 8V20M3 14H23" stroke="#223" /><path d="M3 23H23" stroke="#111" strokeWidth="2" /><path d="M3 14L7 12V16ZM23 14L19 12V16Z" fill="#223" /><text x="10" y="8" fontSize="9" fill="#111" fontFamily="Liberation Sans, sans-serif">X</text></svg></CardBtn>
                  </CardBtns>
                </DialogCard>
              </DialogBody>
            </Dialog>
            <Coords>
              <CoordLabel>XC</CoordLabel><CoordValue>-32.70339</CoordValue>
              <CoordLabel>YC</CoordLabel><CoordValue>23.95948</CoordValue>
            </Coords>
            <Sogou>
              <SogouBar>中</SogouBar>
              <svg width="50" height="48" viewBox="0 0 50 48" style={{ position: "absolute", left: 0, top: 0 }}>
                <path d="M4 10L40 0C44 0 46 2 47 6L50 40L10 48C8 48 7 47 6 44Z" fill="#e8481f" />
                <path d="M35 14C20 9 12 16 18 22C22 26 34 26 36 31C38 37 24 38 14 34" fill="none" stroke="#fff" strokeWidth="7" />
              </svg>
            </Sogou>
            <Watermark>
              <svg width="72" height="82" viewBox="0 0 72 82">
                <defs>
                  <linearGradient id="wmA" x1="0" x2="0" y1="0" y2="1"><stop offset="0" stopColor="#5f8599" /><stop offset="1" stopColor="#05527e" /></linearGradient>
                </defs>
                <path d="M36 0L71 20V62L36 82L1 62V20Z" fill="url(#wmA)" />
                <g stroke="#000" strokeWidth="1.4" fill="none">
                  <path d="M12 14C26 12 40 16 50 30M56 8C62 22 62 38 56 52M70 60C56 62 40 60 30 50M36 81C22 70 14 58 14 44M1 34C8 26 18 24 28 24" />
                </g>
                <path d="M36 22L53 32V52L36 62L19 52V32Z" fill="#000" />
                <path d="M36 24L51 33L36 42L21 33Z" fill="#5b8298" />
                <path d="M21 34L35 43V60L21 51Z" fill="#2b6b8c" />
                <path d="M51 34L37 43V60L51 51Z" fill="#04517e" />
              </svg>
              <MarkText>
                <MarkTitle>3D世界网</MarkTitle>
                <MarkUrl>WWW.3DSJW.COM</MarkUrl>
              </MarkText>
            </Watermark>
          </Viewport>
        </Work>
      </Main>
    </Page>
  );
}
